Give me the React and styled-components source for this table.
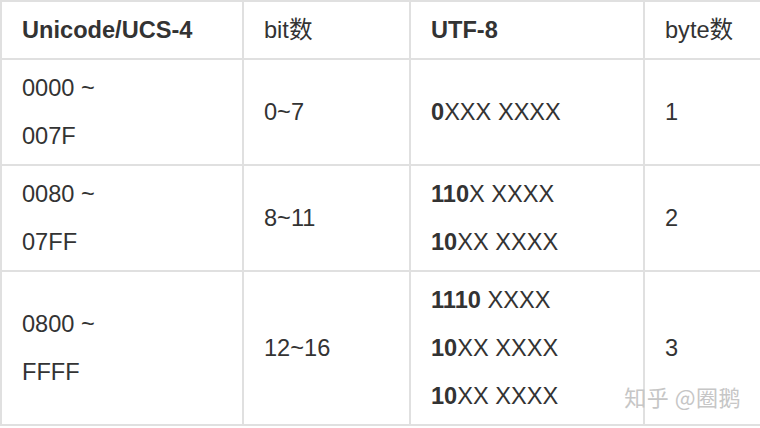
import React from 'react';
import styled, { createGlobalStyle } from 'styled-components';

const GlobalStyle = createGlobalStyle`
    html, body {
        margin: 0;
        padding: 0;
        background: #FFFFFF;
        overflow: hidden;
    }
    body {
        font-family: "Liberation Sans", "Noto Sans CJK SC", sans-serif;
        color: #333333;
    }
`

const Page = styled.div`
    position: relative;
    width: 760px;
    height: 428px;
    overflow: hidden;
`
const Table = styled.table`
    table-layout: fixed;
    width: 775px;
    border-collapse: separate;
    border-spacing: 0;
    border-top: 2px solid #E0E0E0;
    border-left: 2px solid #E0E0E0;
    font-size: 23.6px;
    line-height: 48px;
`
const Cell = styled.td`
    box-sizing: border-box;
    width: ${p => p.$w}px;
    padding: 4px 10px 4px 20px;
    border-right: 2px solid #E0E0E0;
    border-bottom: 2px solid #E0E0E0;
    vertical-align: middle;
    text-align: left;
    white-space: nowrap;
    font-weight: ${p => (p.$bold ? 700 : 400)};
`
const Line = styled.div`
    height: 48px;
`
const B = styled.b`
    font-weight: 700;
`
const Watermark = styled.div`
    position: absolute;
    right: 19px;
    top: 378px;
    font-family: "Noto Sans CJK SC", sans-serif;
    font-size: 22px;
    line-height: 36px;
    color: #C6C6C6;
    letter-spacing: 0.5px;
`

const widths = [242, 167, 234, 132]

const rows = [
    {
        code: ['0000 ~', '007F'],
        bits: '0~7',
        utf: [['0', 'XXX XXXX']],
        bytes: '1',
    },
    {
        code: ['0080 ~', '07FF'],
        bits: '8~11',
        utf: [['110', 'X XXXX'], ['10', 'XX XXXX']],
        bytes: '2',
    },
    {
        code: ['0800 ~', 'FFFF'],
        bits: '12~16',
        utf: [['1110', ' XXXX'], ['10', 'XX XXXX'], ['10', 'XX XXXX']],
        bytes: '3',
    },
]

export default function App() {
    return (
        <Page>
            <GlobalStyle />
            <Table>
                <tbody>
                    <tr>
                        <Cell $w={widths[0]} $bold>Unicode/UCS-4</Cell>
                        <Cell $w={widths[1]}>bit数</Cell>
                        <Cell $w={widths[2]} $bold>UTF-8</Cell>
                        <Cell $w={widths[3]}>byte数</Cell>
                    </tr>
                    {rows.map((r, i) => (
                        <tr key={i}>
                            <Cell $w={widths[0]}>
                                {r.code.map(c => <Line key={c}>{c}</Line>)}
                            </Cell>
                            <Cell $w={widths[1]}>{r.bits}</Cell>
                            <Cell $w={widths[2]}>
                                {r.utf.map(([b, rest], j) => (
                                    <Line key={j}><B>{b}</B>{rest}</Line>
                                ))}
                            </Cell>
                            <Cell $w={widths[3]}>{r.bytes}</Cell>
                        </tr>
                    ))}
                </tbody>
            </Table>
            <Watermark>知乎 @圈鹅</Watermark>
        </Page>
    )
}
